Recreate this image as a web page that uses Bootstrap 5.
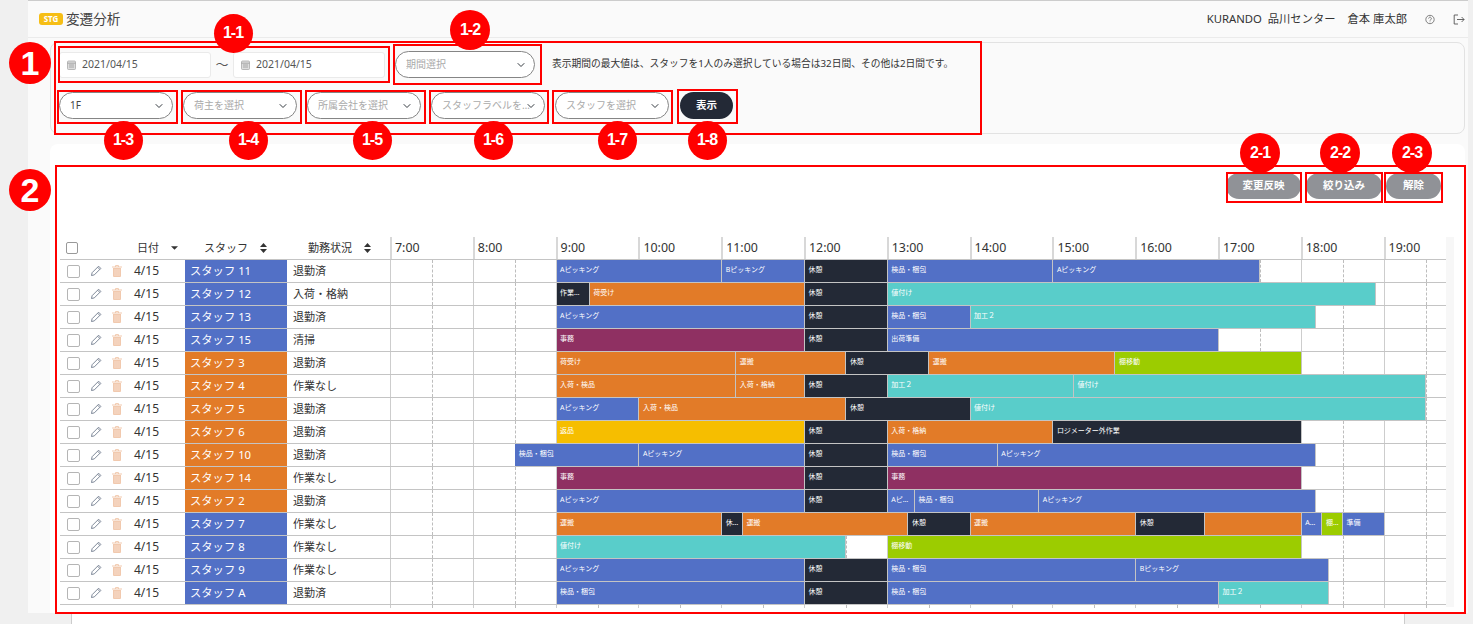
<!DOCTYPE html>
<html lang="ja">
<head>
  <meta charset="UTF-8">
  <title>変遷分析</title>
  <link href="https://cdn.jsdelivr.net/npm/bootstrap@5.3.0/dist/css/bootstrap.min.css" rel="stylesheet">
  <style>
    html, body { height: 624px; overflow: hidden; }
    body { position: relative; background: #f0f0f0; font-family: "Noto Sans", "Noto Sans CJK JP", sans-serif; font-size: 12px; color: #333; }
    .app-main { margin: 0 5px 0 28px; height: 613px; background: #fafafa; }
    .app-head { height: 38px; border-top: 1px solid #ccc; border-bottom: 1px solid #ebebeb; padding: 0 3px 0 11px; }
    .stg-tag { width: 24px; height: 12px; line-height: 12px; border-radius: 3px; background: #f6be15; color: #fff; font-size: 8px; font-weight: 700; text-align: center; margin-right: 3px; }
    .app-title { font-size: 13.6px; color: #444; }
    .head-info { font-size: 11.3px; color: #333; }
    .info-user { margin-left: 12px; margin-right: 18px; }
    .info-exit { margin-left: 18px; }
    .filter-panel { margin: 4px 3px 0 22px; height: 92px; padding: 8px 8px; background: #fafafa; border: 1px solid #e2e2e2; border-radius: 8px; }
    .date-box { width: 152px; height: 26px; padding-left: 7px; gap: 6px; background: #fff; border: 1px solid #eaeaea; border-radius: 3px; font-size: 10.5px; color: #555; }
    .date-sep { width: 22px; color: #555; font-size: 13px; }
    .pill-select.form-select { height: 27px; min-height: 0; padding: 0 12px 0 10px; border: 1.5px solid #858585; border-radius: 14px; font-size: 10px; color: #aaa; background-size: 10px 8px; background-position: right 8px center; text-overflow: ellipsis; box-shadow: none; }
    .pill-select.has-value { color: #444; }
    .w-period { width: 140px; margin-left: 10px; }
    .w-filter { width: 114px; }
    .filter-row { margin-top: 14px; gap: 10px; }
    .note-text { margin-left: 17px; font-size: 9.75px; color: #333; }
    .show-btn.btn { width: 53px; height: 27px; padding: 0; border: 0; border-radius: 14px; background: #232936; color: #fff; font-size: 10.5px; font-weight: 700; margin-left: 1px; }
    .work-card { margin: 10px 3px 0 22px; height: 469px; padding: 29px 9px 0 10px; background: #fff; border-radius: 8px 8px 0 0; }
    .grey-btn.btn { height: 26px; padding: 0; border: 0; border-radius: 13px; background: #909297; color: #fff; font-size: 10.5px; font-weight: 700; }
    .btn-apply { width: 75px; }
    .btn-narrow { width: 76px; margin-left: 5px; }
    .btn-clear { width: 55px; margin-left: 4px; margin-right: 15px; }
    .chart-wrap { margin-top: 38px; }
    .chart-table { width: 1386px; }
    .chart-gutter { width: 8px; height: 370px; background: #f7f7f7; }
    .tbl-row { height: 23px; border-bottom: 1px solid #c4c4c4; }
    .col-tools { width: 124px; }
    .col-staff { width: 103px; }
    .col-state { width: 103px; }
    .col-time { width: 1056px; display: grid; overflow: hidden; }
    .col-time > * { grid-area: 1 / 1; }
    .hour-strip { display: flex; }
    .hour-cell { flex: 0 0 82.8px; border-left: 1px solid #cdcdcd; font-size: 12.4px; line-height: 21px; padding-left: 3px; color: #333; }
    .hour-cell.half-mark { padding: 0; }
    .hour-cell.half-mark::after { content: ""; display: block; height: 100%; margin-left: 41px; border-left: 1px dashed #bdbdbd; }
    .head-row .hour-cell { border-left-width: 2px; border-left-color: #d8d8d8; }
    .head-check.form-check-input { width: 12px; height: 12px; margin: 0 0 0 6px; border: 1.5px solid #999; border-radius: 2px; flex: none; }
    .row-check.form-check-input { width: 13px; height: 13px; margin: 0 0 0 7px; border: 1.5px solid #b5b5b5; border-radius: 2px; flex: none; }
    .head-date { margin-left: 59px; font-size: 11px; }
    .head-staff { padding-left: 20px; font-size: 11px; }
    .head-state { padding-left: 21px; font-size: 11px; }
    .sort-ico { margin-left: 12px; }
    .tool-ico { margin-left: 10px; }
    .tools-date { font-size: 12px; color: #333; margin-left: 12px; }
    .staff-fill { height: 22px; padding-left: 5px; color: #fff; font-size: 11.3px; line-height: 22px; border-left: 1px solid #fff; }
    .state-text { padding-left: 6px; font-size: 11px; }
    .bar-strip { display: flex; height: 22px; padding-left: 1px; }
    .time-bar { height: 22px; flex: none; padding: 0 3px 0 3.5px; border-right: 1px solid #c4c4c4; color: #fff; font-size: 7px; line-height: 20px; white-space: nowrap; overflow: hidden; text-overflow: ellipsis; }
    .c-blue { background: #5270c6; }
    .c-orange { background: #e27b28; }
    .c-dark { background: #232936; }
    .c-teal { background: #59cdca; }
    .c-purple { background: #8f3062; }
    .c-green { background: #9ccc00; }
    .c-yellow { background: #f6be00; }
    .tick-row { height: 3px; margin-left: 330px; width: 1056px; overflow: hidden; }
    .foot-strip { margin-left: 71px; width: 1334px; height: 11px; background: #fff; border-left: 1px solid #ccc; border-right: 1px solid #ccc; }
    .mark-box { position: absolute; border: 2px solid #f00; pointer-events: none; }
    .mark-dot { position: absolute; border-radius: 50%; background: #f00; color: #fff; font-family: "Liberation Sans", sans-serif; font-weight: 700; font-size: 16px; letter-spacing: -1px; display: flex; align-items: center; justify-content: center; }
    .mark-dot.big-dot { font-size: 34px; letter-spacing: 0; }
  </style>
</head>
<body>

  <div class="app-main">
    <div class="app-head d-flex align-items-center justify-content-between">
      <div class="d-flex align-items-center">
        <span class="stg-tag">STG</span>
        <span class="app-title">変遷分析</span>
      </div>
      <div class="head-info d-flex align-items-center">
        <span>KURANDO&nbsp; 品川センター</span>
        <span class="info-user">倉本 庫太郎</span>
        <svg width="10" height="11" viewBox="0 0 11 11" fill="none" stroke="#555" stroke-width=".8"><circle cx="5.5" cy="5.5" r="4.6"/><path d="M4 4.4a1.5 1.5 0 1 1 2.3 1.3c-.5.3-.8.6-.8 1.1M5.5 7.8v.7"/></svg>
        <svg class="info-exit" width="12" height="11" viewBox="0 0 12 11" fill="none" stroke="#555" stroke-width=".9"><path d="M5 1H1.2v9H5M4 5.5h7M8.6 3l2.5 2.5L8.6 8"/></svg>
      </div>
    </div>

    <div class="filter-panel">
      <div class="d-flex align-items-center">
        <div class="date-box d-flex align-items-center">
          <svg width="9" height="10" viewBox="0 0 9 10"><rect x=".5" y="1" width="8" height="8.5" rx="1" fill="#ddd" stroke="#aaa" stroke-width=".8"/><path d="M.5 3.2h8M2 5h5M2 7h5" stroke="#999" stroke-width=".8"/></svg>
          <span>2021/04/15</span>
        </div>
        <div class="date-sep text-center">〜</div>
        <div class="date-box d-flex align-items-center">
          <svg width="9" height="10" viewBox="0 0 9 10"><rect x=".5" y="1" width="8" height="8.5" rx="1" fill="#ddd" stroke="#aaa" stroke-width=".8"/><path d="M.5 3.2h8M2 5h5M2 7h5" stroke="#999" stroke-width=".8"/></svg>
          <span>2021/04/15</span>
        </div>
        <select class="form-select pill-select w-period"><option>期間選択</option></select>
        <span class="note-text">表示期間の最大値は、スタッフを1人のみ選択している場合は32日間、その他は2日間です。</span>
      </div>
      <div class="d-flex align-items-center filter-row">
        <select class="form-select pill-select has-value w-filter"><option>1F</option></select>
        <select class="form-select pill-select w-filter"><option>荷主を選択</option></select>
        <select class="form-select pill-select w-filter"><option>所属会社を選択</option></select>
        <select class="form-select pill-select w-filter"><option>スタッフラベルを選択</option></select>
        <select class="form-select pill-select w-filter"><option>スタッフを選択</option></select>
        <button type="button" class="btn show-btn">表示</button>
      </div>
    </div>

    <div class="work-card">
      <div class="d-flex justify-content-end">
        <button type="button" class="btn grey-btn btn-apply">変更反映</button>
        <button type="button" class="btn grey-btn btn-narrow">絞り込み</button>
        <button type="button" class="btn grey-btn btn-clear">解除</button>
      </div>
      <div class="chart-wrap d-flex">
        <div class="chart-table" id="chart"></div>
        <div class="chart-gutter"></div>
      </div>
    </div>
  </div>
  <div class="foot-strip"></div>

  <script>
    const HOUR = 82.8;
    const pencil = '<svg class="tool-ico" width="12" height="12" viewBox="0 0 12 12" fill="none" stroke="#6f7b8c" stroke-width=".9"><path d="M1.5 10.5l.6-2.8L8.6 1.2l2.2 2.2-6.5 6.5zM7.6 2.2l2.2 2.2"/></svg>';
    const trash = '<svg class="tool-ico" width="10" height="12" viewBox="0 0 10 12"><path d="M1 3h8v8a1 1 0 0 1-1 1H2a1 1 0 0 1-1-1z" fill="#f1c9ae"/><path d="M0 2h10M3.5 2V.6h3V2" fill="none" stroke="#f1c9ae"/><path d="M3 4v7M5 4v7M7 4v7" stroke="#fbeadf" stroke-width=".6"/></svg>';
    const sortBoth = '<svg class="sort-ico" width="7" height="10" viewBox="0 0 7 10" fill="#333"><path d="M3.5 0L7 4H0zM3.5 10L0 6h7z"/></svg>';
    const sortDown = '<svg class="sort-ico" width="7" height="4" viewBox="0 0 8 4" fill="#333"><path d="M0 0h8L4 4z"/></svg>';

    const A = 'Aピッキング', B = 'Bピッキング', K = '検品・梱包', R = '休憩', U = '運搬', N = '値付け', J = '事務',
          T = '棚移動', I = '入荷・検品', G = '入荷・格納', P = '加工２';

    // [staff, colour, status, [[from, to, label, colour], ...]]
    const rows = [
      ['スタッフ 11', 'blue', '退勤済', [[9, 11, A, 'blue'], [11, 12, B, 'blue'], [12, 13, R, 'dark'], [13, 15, K, 'blue'], [15, 17.5, A, 'blue']]],
      ['スタッフ 12', 'blue', '入荷・格納', [[9, 9.4, '作業準備中', 'dark'], [9.4, 12, '荷受け', 'orange'], [12, 13, R, 'dark'], [13, 18.9, N, 'teal']]],
      ['スタッフ 13', 'blue', '退勤済', [[9, 12, A, 'blue'], [12, 13, R, 'dark'], [13, 14, K, 'blue'], [14, 18.17, P, 'teal']]],
      ['スタッフ 15', 'blue', '清掃', [[9, 12, J, 'purple'], [12, 13, R, 'dark'], [13, 17, '出荷準備', 'blue']]],
      ['スタッフ 3', 'orange', '退勤済', [[9, 11.17, '荷受け', 'orange'], [11.17, 12.5, U, 'orange'], [12.5, 13.5, R, 'dark'], [13.5, 15.75, U, 'orange'], [15.75, 18, T, 'green']]],
      ['スタッフ 4', 'orange', '作業なし', [[9, 11.17, I, 'orange'], [11.17, 12, G, 'orange'], [12, 13, R, 'dark'], [13, 15.25, P, 'teal'], [15.25, 19.5, N, 'teal']]],
      ['スタッフ 5', 'orange', '退勤済', [[9, 10, A, 'blue'], [10, 12.5, I, 'orange'], [12.5, 14, R, 'dark'], [14, 19.5, N, 'teal']]],
      ['スタッフ 6', 'orange', '退勤済', [[9, 12, '返品', 'yellow'], [12, 13, R, 'dark'], [13, 15, G, 'orange'], [15, 18, 'ロジメーター外作業', 'dark']]],
      ['スタッフ 10', 'orange', '退勤済', [[8.5, 10, K, 'blue'], [10, 12, A, 'blue'], [12, 13, R, 'dark'], [13, 14.33, K, 'blue'], [14.33, 18.17, A, 'blue']]],
      ['スタッフ 14', 'orange', '作業なし', [[9, 12, J, 'purple'], [12, 13, R, 'dark'], [13, 18, J, 'purple']]],
      ['スタッフ 2', 'orange', '退勤済', [[9, 12, A, 'blue'], [12, 13, R, 'dark'], [13, 13.33, A, 'blue'], [13.33, 14.83, K, 'blue'], [14.83, 18.17, A, 'blue']]],
      ['スタッフ 7', 'blue', '作業なし', [[9, 11, U, 'orange'], [11, 11.25, R, 'dark'], [11.25, 13.25, U, 'orange'], [13.25, 14, R, 'dark'], [14, 16, U, 'orange'], [16, 16.83, R, 'dark'], [16.83, 18, '', 'orange'], [18, 18.25, A, 'blue'], [18.25, 18.5, T, 'green'], [18.5, 19, '準備', 'blue']]],
      ['スタッフ 8', 'blue', '作業なし', [[9, 12.5, N, 'teal'], [13, 18, T, 'green']]],
      ['スタッフ 9', 'blue', '作業なし', [[9, 12, A, 'blue'], [12, 13, R, 'dark'], [13, 16, K, 'blue'], [16, 18.33, B, 'blue']]],
      ['スタッフ A', 'blue', '退勤済', [[9, 12, K, 'blue'], [12, 13, R, 'dark'], [13, 17, K, 'blue'], [17, 18.33, P, 'teal']]]
    ];

    const hours = [7, 8, 9, 10, 11, 12, 13, 14, 15, 16, 17, 18, 19];
    const gridCells = hours.map(() => '<div class="hour-cell half-mark"></div>').join('');

    function barHtml(bars) {
      let pos = 7, html = '';
      bars.forEach(([from, to, label, colour]) => {
        const gap = ((from - pos) * HOUR).toFixed(1);
        const width = ((to - from) * HOUR).toFixed(1);
        html += `<div class="time-bar c-${colour}" style="margin-left:${gap}px;width:${width}px">${label}</div>`;
        pos = to;
      });
      return html;
    }

    let html = `<div class="tbl-row head-row d-flex">
      <div class="col-tools d-flex align-items-center"><input type="checkbox" class="form-check-input head-check">
        <span class="head-date">日付</span>${sortDown}</div>
      <div class="col-staff d-flex align-items-center head-staff">スタッフ${sortBoth}</div>
      <div class="col-state d-flex align-items-center head-state">勤務状況${sortBoth}</div>
      <div class="col-time"><div class="hour-strip">${hours.map(h => `<div class="hour-cell">${h}:00</div>`).join('')}</div></div>
    </div>`;

    rows.forEach(([staff, colour, status, bars]) => {
      html += `<div class="tbl-row d-flex">
        <div class="col-tools d-flex align-items-center">
          <input type="checkbox" class="form-check-input row-check">
          ${pencil}
          ${trash}
          <span class="tools-date">4/15</span>
        </div>
        <div class="col-staff"><div class="staff-fill c-${colour}">${staff}</div></div>
        <div class="col-state state-text d-flex align-items-center">${status}</div>
        <div class="col-time">
          <div class="hour-strip">${gridCells}</div>
          <div class="bar-strip">${barHtml(bars)}</div>
        </div>
      </div>`;
    });
    html += `<div class="tick-row hour-strip">${gridCells}</div>`;
    document.getElementById('chart').innerHTML = html;

    // red call-outs drawn over the screen capture: [left, top, right, bottom]
    const boxes = [
      [54, 41, 982, 135], [58, 46, 390, 83], [393, 44, 542, 85], [57, 90, 178, 124], [181, 90, 302, 124],
      [305, 90, 426, 124], [429, 90, 549, 124], [552, 90, 673, 124], [677, 89, 738, 124],
      [55, 165, 1466, 614], [1226, 172, 1302, 203], [1305, 172, 1383, 203], [1384, 172, 1443, 203]
    ];
    // [centre x, centre y, diameter, label]
    const dots = [
      [30, 63, 42, '1'], [30, 190, 42, '2'], [233, 33, 39, '1-1'], [470, 30, 40, '1-2'], [123, 140, 39, '1-3'],
      [248, 140, 39, '1-4'], [372, 140, 39, '1-5'], [493, 140, 39, '1-6'], [617, 140, 39, '1-7'], [707, 140, 39, '1-8'],
      [1260, 153, 40, '2-1'], [1340, 153, 40, '2-2'], [1412, 153, 40, '2-3']
    ];
    boxes.forEach(([l, t, r, b]) => {
      document.body.insertAdjacentHTML('beforeend', `<div class="mark-box" style="left:${l}px;top:${t}px;width:${r - l}px;height:${b - t}px"></div>`);
    });
    dots.forEach(([x, y, d, label]) => {
      document.body.insertAdjacentHTML('beforeend', `<div class="mark-dot ${label.length === 1 ? 'big-dot' : ''}" style="left:${x - d / 2}px;top:${y - d / 2}px;width:${d}px;height:${d}px">${label}</div>`);
    });
  </script>

  <script src="https://cdn.jsdelivr.net/npm/bootstrap@5.3.0/dist/js/bootstrap.bundle.min.js"></script>
</body>
</html>
